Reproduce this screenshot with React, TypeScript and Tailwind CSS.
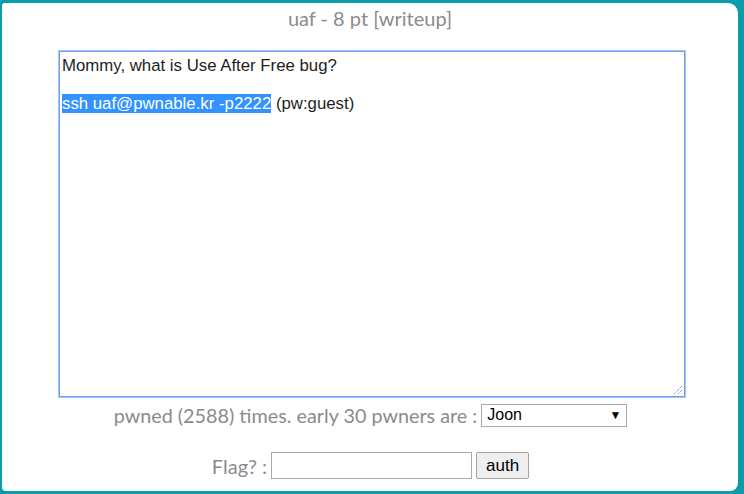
import React from "react";

export default function App() {
  const lato = { fontFamily: "Lato, 'Open Sans', sans-serif" };
  const arial = { fontFamily: "'Liberation Sans', Arial, sans-serif" };
  return (
    <div className="w-[744px] h-[494px] bg-[#0b9ca9] pt-[3px] pl-[2px] pr-[6px] pb-[3px] overflow-hidden">
      <div className="w-full h-full bg-white rounded-tl-[3px] rounded-tr-[10px] rounded-br-[8px] rounded-bl-[4px] flex flex-col">
        <div
          className="text-center text-[20px] leading-[24px] text-[#8b8b8b] pt-[3px]"
          style={lato}
        >
          uaf - 8 pt [writeup]
        </div>
        <div className="pl-[57px] pt-[21px]">
          <div
            className="relative w-[626px] h-[346px] border border-[#6f9fe9] outline outline-1 outline-[#a7c4f2] pl-[2px] pt-[4px] text-[16.8px] leading-[19px] text-[#1e1e1e]"
            style={arial}
          >
            <div>Mommy, what is Use After Free bug?</div>
            <div>&nbsp;</div>
            <div>
              <span className="bg-[#3392ff] text-white">ssh uaf@pwnable.kr -p2222</span> (pw:guest)
            </div>
            <svg
              className="absolute right-[1px] bottom-[1px]"
              width="12"
              height="12"
              viewBox="0 0 12 12"
            >
              <path d="M11 3 L3 11 M11 7 L7 11" stroke="#6b6b6b" strokeWidth="1" strokeDasharray="1 1" />
            </svg>
          </div>
        </div>
        <div className="flex items-center justify-center pt-[6px] gap-[4px] pl-[1px]">
          <span className="text-[19.8px] leading-[24px] text-[#8b8b8b]" style={lato}>
            pwned (2588) times. early 30 pwners are :
          </span>
          <div
            className="w-[146px] h-[23px] border border-[#a9a9a9] flex items-center justify-between pl-[5px] pr-[5px] text-[16px] text-black"
            style={arial}
          >
            <span>Joon</span>
            <span className="text-[12px]">▼</span>
          </div>
        </div>
        <div className="flex items-center justify-center pt-[25px] gap-[4px] pl-[1px]">
          <span className="text-[20px] leading-[24px] text-[#8b8b8b]" style={lato}>
            Flag? :
          </span>
          <div className="w-[201px] h-[27px] border border-[#a9a9a9]" />
          <div
            className="w-[53px] h-[27px] border border-[#a3a3a3] bg-[#efefef] rounded-[2px] flex items-center justify-center text-[17px] text-black"
            style={arial}
          >
            auth
          </div>
        </div>
      </div>
    </div>
  );
}
